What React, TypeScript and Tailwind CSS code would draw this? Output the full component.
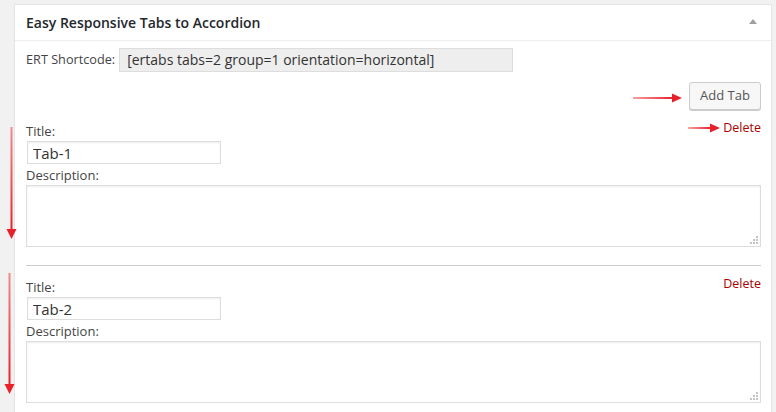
import { ReactElement } from "react";

function HArrow({ width }: { width: number }): ReactElement {
  return (
    <svg width={width} height="10" viewBox={`0 0 ${width} 10`}>
      <defs>
        <linearGradient id={`hg${width}`} x1="0" x2="1" y1="0" y2="0">
          <stop offset="0" stopColor="#f7a3a3" />
          <stop offset="1" stopColor="#e8202a" />
        </linearGradient>
      </defs>
      <rect x="0" y="4" width={width - 9} height="2" fill={`url(#hg${width})`} />
      <polygon points={`${width - 10},0.5 ${width},5 ${width - 10},9.5`} fill="#e8202a" />
    </svg>
  );
}

function VArrow({ height }: { height: number }): ReactElement {
  return (
    <svg width="11" height={height} viewBox={`0 0 11 ${height}`}>
      <defs>
        <linearGradient id={`vg${height}`} x1="0" x2="0" y1="0" y2="1">
          <stop offset="0" stopColor="#f08c8c" />
          <stop offset="1" stopColor="#e8202a" />
        </linearGradient>
      </defs>
      <rect x="4.5" y="0" width="2" height={height - 9} fill={`url(#vg${height})`} />
      <polygon points={`0.5,${height - 10} 10.5,${height - 10} 5.5,${height}`} fill="#e8202a" />
    </svg>
  );
}

function Grip(): ReactElement {
  const dots = [
    [6, 0],
    [3, 3],
    [6, 3],
    [0, 6],
    [3, 6],
    [6, 6],
  ];
  return (
    <svg width="8" height="8" className="absolute right-[3px] bottom-[3px]">
      {dots.map(([x, y]) => (
        <rect key={`${x}-${y}`} x={x} y={y} width="2" height="2" fill="#c4c4c4" />
      ))}
    </svg>
  );
}

function TabBlock({ name }: { name: string }): ReactElement {
  return (
    <div className="flex flex-col">
      <div className="flex justify-between items-start h-[18px]">
        <span className="text-[13px] leading-[18px] text-[#444]">Title:</span>
        <span className="text-[12.5px] leading-[13px] text-[#a00] -mt-[1px]">Delete</span>
      </div>
      <input
        type="text"
        defaultValue={name}
        className="ml-[1px] mt-[1px] w-[194px] h-[23px] border border-[#ddd] bg-white px-[5px] text-[15px] text-[#333] outline-none shadow-[inset_0_1px_2px_rgba(0,0,0,0.07)]"
      />
      <span className="mt-[2px] text-[13px] leading-[18px] text-[#444]">Description:</span>
      <div className="relative mt-[1px]">
        <textarea className="block w-full h-[62px] border border-[#ddd] bg-white resize-none outline-none shadow-[inset_0_1px_2px_rgba(0,0,0,0.07)]" />
        <Grip />
      </div>
    </div>
  );
}

export default function App(): ReactElement {
  return (
    <div className="relative w-[776px] h-[412px] overflow-hidden bg-[#f1f1f1] pt-[4px] pl-[14px] pr-[4px] font-['Open_Sans',sans-serif]">
      <div className="bg-white border border-[#e5e5e5] shadow-[0_1px_1px_rgba(0,0,0,0.04)] min-h-[420px]">
        <div className="flex items-center justify-between h-[36px] border-b border-[#eee] px-[11px]">
          <h2 className="text-[14px] font-semibold text-[#23282d] leading-none">Easy Responsive Tabs to Accordion</h2>
          <svg width="8" height="5" className="mr-[3px] -mt-[2px]">
            <polygon points="4,0 8,5 0,5" fill="#a0a0a0" />
          </svg>
        </div>
        <div className="pl-[11px] pr-[10px] pt-[7px]">
          <div className="flex items-center gap-[4px]">
            <span className="text-[12.7px] text-[#444]">ERT Shortcode:</span>
            <div className="w-[394px] h-[24px] bg-[#eee] border border-[#ddd] px-[7px] text-[14px] leading-[21px] text-[#333]">
              [ertabs tabs=2 group=1 orientation=horizontal]
            </div>
          </div>
          <div className="flex justify-end mt-[10px]">
            <button className="w-[72px] h-[28px] border border-[#ccc] rounded-[3px] bg-[#f7f7f7] text-[13px] text-[#555] shadow-[0_1px_0_#ccc]">
              Add Tab
            </button>
          </div>
          <div className="mt-[12px]">
            <TabBlock name="Tab-1" />
          </div>
          <div className="mt-[18px] border-t border-[#ccc]" />
          <div className="mt-[12px]">
            <TabBlock name="Tab-2" />
          </div>
        </div>
      </div>

      <div className="absolute left-[633px] top-[93px]">
        <HArrow width={49} />
      </div>
      <div className="absolute left-[688px] top-[123px]">
        <HArrow width={32} />
      </div>
      <div className="absolute left-[6px] top-[127px]">
        <VArrow height={112} />
      </div>
      <div className="absolute left-[4px] top-[273px]">
        <VArrow height={121} />
      </div>
    </div>
  );
}
